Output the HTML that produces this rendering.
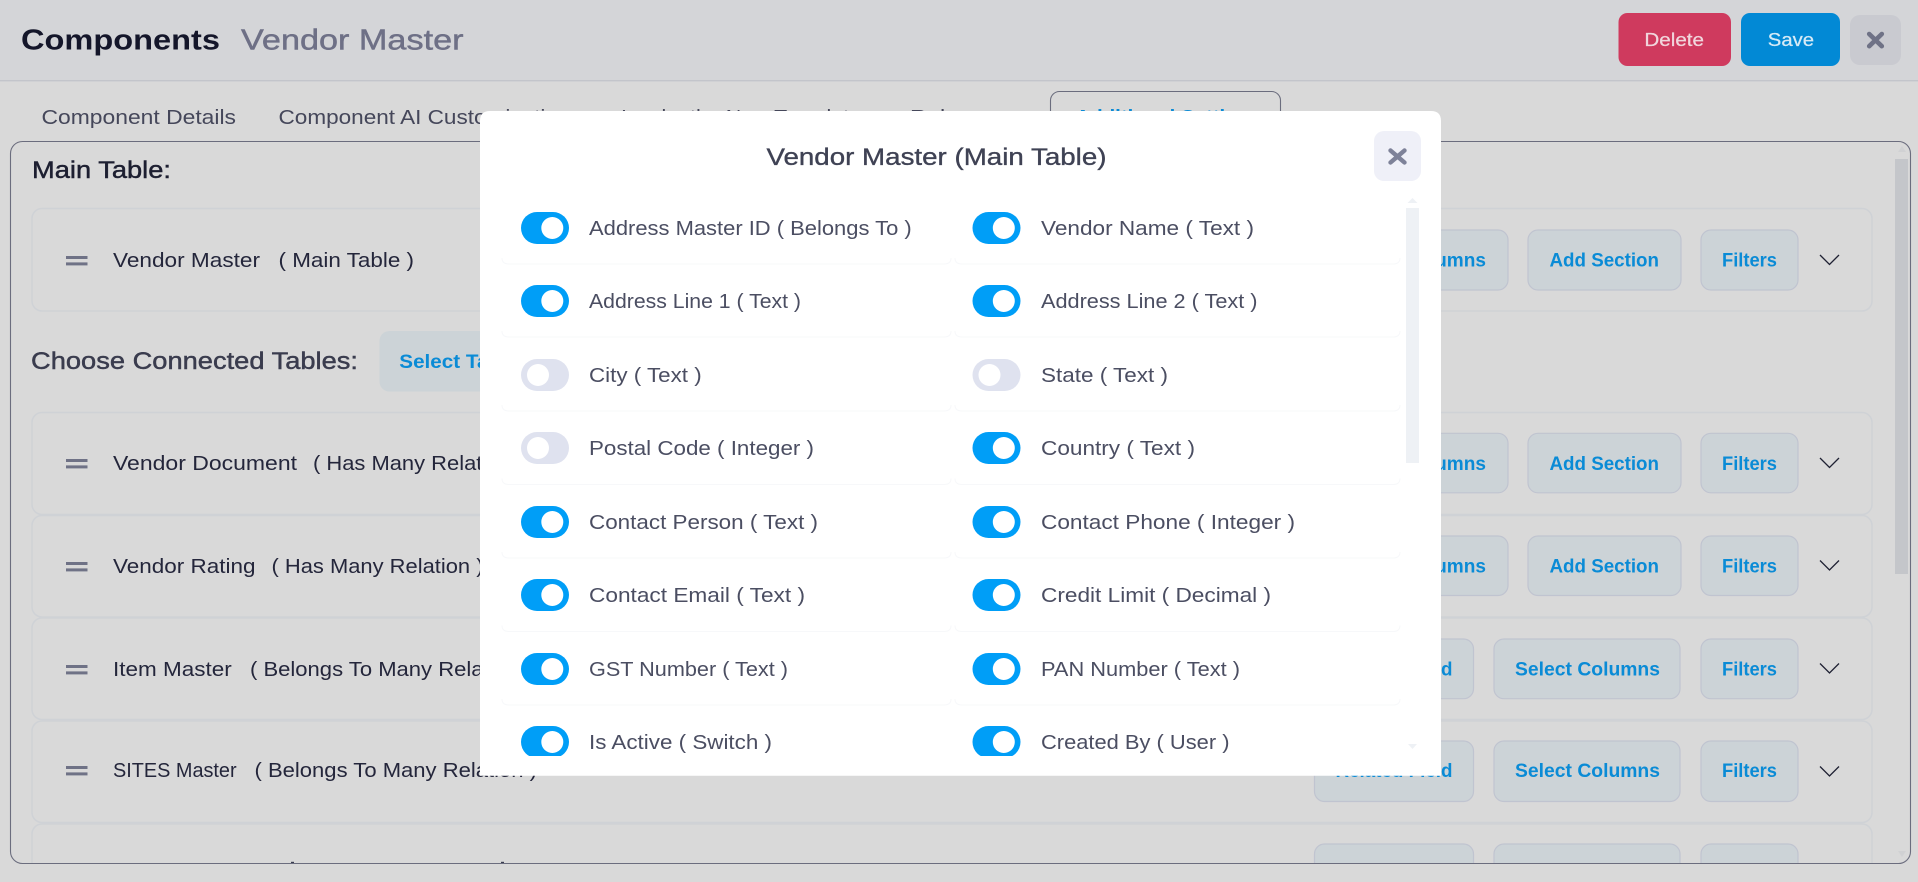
<!DOCTYPE html>
<html lang="en">
<head>
<meta charset="utf-8">
<title>Components - Vendor Master</title>
<style>
html,body{margin:0;padding:0;width:1918px;height:882px;overflow:hidden;background:#d9d9d9}
svg{display:block;position:absolute;left:0;top:0}
text{font-family:"Liberation Sans",Arial,sans-serif;white-space:pre}
.row{font-size:20.5px;fill:#4b4e62}
.card{font-size:20.5px;fill:#24263b}
.tab{font-size:20.5px;fill:#45475a}
.btn{font-size:19px;font-weight:700;fill:#0a8bd6}
.sb{fill:#ccd3d7;stroke:#c0c4d0;stroke-width:1.2}
.cd{fill:#d9d9d9;stroke:#cfd2d6;stroke-width:1.5}
.hd{fill:#6f7286}
.ch{fill:none;stroke:#1f2133;stroke-width:1.3}
</style>
</head>
<body>
<svg width="1918" height="882" viewBox="0 0 1918 882" xmlns="http://www.w3.org/2000/svg">
<defs>
<clipPath id="pc"><rect x="0" y="0" width="1918" height="863"/></clipPath>
<clipPath id="mb"><rect x="480" y="190" width="961" height="566"/></clipPath>
<g id="on"><rect x="0" y="0" width="48" height="32" rx="16" fill="#009ef7"/><circle cx="31.3" cy="16" r="11" fill="#fff"/></g>
<g id="off"><rect x="0" y="0" width="48" height="32" rx="16" fill="#dfe2ef"/><circle cx="17" cy="16" r="11" fill="#fff"/></g>
</defs>

<!-- header -->
<rect x="0" y="0" width="1918" height="80" fill="#d4d5d8"/>
<rect x="0" y="80" width="1918" height="1.4" fill="#c3c5cb"/>
<text x="21" y="49.5" font-size="29" font-weight="700" fill="#14162a" textLength="199" lengthAdjust="spacingAndGlyphs">Components</text>
<text x="241" y="49.5" font-size="29" fill="#6e7086" stroke="#6e7086" stroke-width=".45" textLength="222.5" lengthAdjust="spacingAndGlyphs">Vendor Master</text>
<rect x="1618.5" y="13" width="112.5" height="53" rx="9" fill="#cf3a5e"/>
<text x="1644.4" y="46" font-size="18.5" fill="#f1d6dd" stroke="#f1d6dd" stroke-width=".25" textLength="59.6" lengthAdjust="spacingAndGlyphs">Delete</text>
<rect x="1741" y="13" width="99" height="53" rx="9" fill="#0289d5"/>
<text x="1767.8" y="46" font-size="18.5" fill="#d6eaf6" stroke="#d6eaf6" stroke-width=".25" textLength="46.2" lengthAdjust="spacingAndGlyphs">Save</text>
<rect x="1850" y="15" width="51" height="50" rx="10" fill="#c9cad0"/>
<path d="M1869.2 34 L1881.8 46.2 M1881.8 34 L1869.2 46.2" stroke="#6f7286" stroke-width="4.6" stroke-linecap="round" fill="none"/>

<!-- tabs -->
<text class="tab" x="41.5" y="124" textLength="194.5" lengthAdjust="spacingAndGlyphs">Component Details</text>
<text class="tab" x="278.5" y="124" textLength="292" lengthAdjust="spacingAndGlyphs">Component AI Customization</text>
<text class="tab" x="621" y="124" textLength="240" lengthAdjust="spacingAndGlyphs">Invoke the New Template</text>
<text class="tab" x="910" y="124" textLength="60" lengthAdjust="spacingAndGlyphs">Roles</text>
<rect x="1050.5" y="91.5" width="230" height="50" rx="9" fill="#d9d9d9" stroke="#6b6d7e" stroke-width="1.1"/>
<text x="1075.5" y="124" font-size="20" font-weight="700" fill="#0a8bd6" textLength="186" lengthAdjust="spacingAndGlyphs">Additional Settings</text>

<!-- panel contents -->
<g clip-path="url(#pc)">
<text x="32" y="178" font-size="24.5" fill="#1d1f31" stroke="#1d1f31" stroke-width=".45" textLength="139" lengthAdjust="spacingAndGlyphs">Main Table:</text>

<rect class="cd" x="32" y="208.5" width="1840" height="102.5" rx="10"/>
<rect class="hd" x="66" y="256" width="21.5" height="3"/><rect class="hd" x="66" y="262.4" width="21.5" height="3"/>
<text class="card" x="113" y="267" textLength="147" lengthAdjust="spacingAndGlyphs">Vendor Master</text>
<text class="card" x="278.5" y="267" textLength="135.5" lengthAdjust="spacingAndGlyphs">( Main Table )</text>
<rect class="sb" x="1322" y="230" width="186" height="60" rx="10"/>
<text class="btn" x="1343" y="266.7" textLength="143" lengthAdjust="spacingAndGlyphs">Select Columns</text>
<rect class="sb" x="1528" y="230" width="153" height="60" rx="10"/>
<text class="btn" x="1549.5" y="266.7" textLength="109.5" lengthAdjust="spacingAndGlyphs">Add Section</text>
<rect class="sb" x="1701" y="230" width="97" height="60" rx="10"/>
<text class="btn" x="1722" y="266.7" textLength="55" lengthAdjust="spacingAndGlyphs">Filters</text>
<polyline class="ch" points="1820,255 1829.5,264.5 1839,255"/>

<text x="31" y="369" font-size="24.5" fill="#3a3c4e" stroke="#3a3c4e" stroke-width=".45" textLength="327" lengthAdjust="spacingAndGlyphs">Choose Connected Tables:</text>
<rect x="379.5" y="331" width="160" height="60.5" rx="10" fill="#ccd3d7"/>
<text class="btn" x="399.3" y="368" textLength="119" lengthAdjust="spacingAndGlyphs">Select Table</text>

<!-- card 2 -->
<rect class="cd" x="32" y="412.5" width="1840" height="102" rx="10"/>
<rect class="hd" x="66" y="459" width="21.5" height="3"/><rect class="hd" x="66" y="465.4" width="21.5" height="3"/>
<text class="card" x="113" y="470" textLength="184" lengthAdjust="spacingAndGlyphs">Vendor Document</text>
<text class="card" x="313" y="470" textLength="212" lengthAdjust="spacingAndGlyphs">( Has Many Relation )</text>
<rect class="sb" x="1322" y="433.3" width="186" height="59.5" rx="10"/>
<text class="btn" x="1343" y="470" textLength="143" lengthAdjust="spacingAndGlyphs">Select Columns</text>
<rect class="sb" x="1528" y="433.3" width="153" height="59.5" rx="10"/>
<text class="btn" x="1549.5" y="470" textLength="109.5" lengthAdjust="spacingAndGlyphs">Add Section</text>
<rect class="sb" x="1701" y="433.3" width="97" height="59.5" rx="10"/>
<text class="btn" x="1722" y="470" textLength="55" lengthAdjust="spacingAndGlyphs">Filters</text>
<polyline class="ch" points="1820,458 1829.5,467.5 1839,458"/>

<!-- card 3 -->
<rect class="cd" x="32" y="515.5" width="1840" height="101.5" rx="10"/>
<rect class="hd" x="66" y="562" width="21.5" height="3"/><rect class="hd" x="66" y="568.4" width="21.5" height="3"/>
<text class="card" x="113" y="573" textLength="142.5" lengthAdjust="spacingAndGlyphs">Vendor Rating</text>
<text class="card" x="271.5" y="573" textLength="212" lengthAdjust="spacingAndGlyphs">( Has Many Relation )</text>
<rect class="sb" x="1322" y="536" width="186" height="59.5" rx="10"/>
<text class="btn" x="1343" y="572.5" textLength="143" lengthAdjust="spacingAndGlyphs">Select Columns</text>
<rect class="sb" x="1528" y="536" width="153" height="59.5" rx="10"/>
<text class="btn" x="1549.5" y="572.5" textLength="109.5" lengthAdjust="spacingAndGlyphs">Add Section</text>
<rect class="sb" x="1701" y="536" width="97" height="59.5" rx="10"/>
<text class="btn" x="1722" y="572.5" textLength="55" lengthAdjust="spacingAndGlyphs">Filters</text>
<polyline class="ch" points="1820,560.5 1829.5,570 1839,560.5"/>

<!-- card 4 -->
<rect class="cd" x="32" y="618" width="1840" height="101.5" rx="10"/>
<rect class="hd" x="66" y="665" width="21.5" height="3"/><rect class="hd" x="66" y="671.4" width="21.5" height="3"/>
<text class="card" x="113" y="676" textLength="118.7" lengthAdjust="spacingAndGlyphs">Item Master</text>
<text class="card" x="250" y="676" textLength="282.5" lengthAdjust="spacingAndGlyphs">( Belongs To Many Relation )</text>
<rect class="sb" x="1314.5" y="639" width="159" height="59.7" rx="10"/>
<text class="btn" x="1335.5" y="675.5" textLength="117" lengthAdjust="spacingAndGlyphs">Related Field</text>
<rect class="sb" x="1494" y="639" width="186" height="59.7" rx="10"/>
<text class="btn" x="1515" y="675.5" textLength="145" lengthAdjust="spacingAndGlyphs">Select Columns</text>
<rect class="sb" x="1701" y="639" width="97" height="59.7" rx="10"/>
<text class="btn" x="1722" y="675.5" textLength="55" lengthAdjust="spacingAndGlyphs">Filters</text>
<polyline class="ch" points="1820,663.5 1829.5,673 1839,663.5"/>

<!-- card 5 -->
<rect class="cd" x="32" y="721" width="1840" height="101.5" rx="10"/>
<rect class="hd" x="66" y="766" width="21.5" height="3"/><rect class="hd" x="66" y="772.4" width="21.5" height="3"/>
<text class="card" x="113" y="777" textLength="123.6" lengthAdjust="spacingAndGlyphs">SITES Master</text>
<text class="card" x="254.5" y="777" textLength="282.5" lengthAdjust="spacingAndGlyphs">( Belongs To Many Relation )</text>
<rect class="sb" x="1314.5" y="741" width="159" height="60.5" rx="10"/>
<text class="btn" x="1335.5" y="777" textLength="117" lengthAdjust="spacingAndGlyphs">Related Field</text>
<rect class="sb" x="1494" y="741" width="186" height="60.5" rx="10"/>
<text class="btn" x="1515" y="777" textLength="145" lengthAdjust="spacingAndGlyphs">Select Columns</text>
<rect class="sb" x="1701" y="741" width="97" height="60.5" rx="10"/>
<text class="btn" x="1722" y="777" textLength="55" lengthAdjust="spacingAndGlyphs">Filters</text>
<polyline class="ch" points="1820,766.5 1829.5,776 1839,766.5"/>

<!-- card 6 -->
<rect class="cd" x="32" y="824" width="1840" height="102" rx="10"/>
<text class="card" x="113" y="882" textLength="160" lengthAdjust="spacingAndGlyphs">Vendor Contract</text>
<text class="card" x="291" y="882" textLength="212" lengthAdjust="spacingAndGlyphs">( Has Many Relation )</text>
<rect x="291" y="861.8" width="3" height="1.4" fill="#3a3c50"/><rect x="501" y="861.8" width="3" height="1.4" fill="#3a3c50"/>
<rect class="sb" x="1314.5" y="844" width="159" height="60" rx="10"/>
<rect class="sb" x="1494" y="844" width="186" height="60" rx="10"/>
<rect class="sb" x="1701" y="844" width="97" height="60" rx="10"/>

<!-- panel scrollbar -->
<path d="M1902 146 l-4 6 h8 z" fill="#d0d1d3"/>
<rect x="1895" y="159" width="13" height="415" fill="#c4c6ca"/>
<path d="M1898 851 l4 6 l4 -6 z" fill="#d0d1d3"/>
</g>
<rect x="10.5" y="141.5" width="1900" height="722" rx="12" fill="none" stroke="#6b6d7e" stroke-width="1.1"/>

<!-- modal -->
<path d="M490 111 H1431 Q1441 111 1441 121 V775.7 H480 V121 Q480 111 490 111 Z" fill="#fff"/>
<text x="766.5" y="165" font-size="24" fill="#3f4254" stroke="#3f4254" stroke-width=".35" textLength="340" lengthAdjust="spacingAndGlyphs">Vendor Master (Main Table)</text>
<rect x="1374" y="131" width="47" height="50" rx="10" fill="#eff0f8"/>
<path d="M1390.5 150.5 L1404.5 162.5 M1404.5 150.5 L1390.5 162.5" stroke="#7e8299" stroke-width="4.4" stroke-linecap="round" fill="none"/>

<!-- modal scrollbar -->
<path d="M1412.5 198 l-5 5 h10 z" fill="#eef1f5"/>
<rect x="1406" y="208" width="13" height="255" fill="#eef1f5"/>
<path d="M1408 744 l4.5 5 l4.5 -5 z" fill="#eef1f5"/>

<!-- row separators -->
<g fill="none" stroke="#f7f8fa" stroke-width="1">
<path d="M502 258 q0 6 7 6 H944 q7 0 7 -6 M955 258 q0 6 7 6 H1393 q7 0 7 -6"/>
<path d="M502 331 q0 6 7 6 H944 q7 0 7 -6 M955 331 q0 6 7 6 H1393 q7 0 7 -6"/>
<path d="M502 405 q0 6 7 6 H944 q7 0 7 -6 M955 405 q0 6 7 6 H1393 q7 0 7 -6"/>
<path d="M502 478.5 q0 6 7 6 H944 q7 0 7 -6 M955 478.5 q0 6 7 6 H1393 q7 0 7 -6"/>
<path d="M502 552 q0 6 7 6 H944 q7 0 7 -6 M955 552 q0 6 7 6 H1393 q7 0 7 -6"/>
<path d="M502 625.5 q0 6 7 6 H944 q7 0 7 -6 M955 625.5 q0 6 7 6 H1393 q7 0 7 -6"/>
<path d="M502 699 q0 6 7 6 H944 q7 0 7 -6 M955 699 q0 6 7 6 H1393 q7 0 7 -6"/>
</g>

<!-- toggles -->
<g clip-path="url(#mb)">
<use href="#on" x="521" y="212"/><use href="#on" x="972.5" y="212"/>
<use href="#on" x="521" y="285"/><use href="#on" x="972.5" y="285"/>
<use href="#off" x="521" y="359"/><use href="#off" x="972.5" y="359"/>
<use href="#off" x="521" y="432"/><use href="#on" x="972.5" y="432"/>
<use href="#on" x="521" y="506"/><use href="#on" x="972.5" y="506"/>
<use href="#on" x="521" y="579"/><use href="#on" x="972.5" y="579"/>
<use href="#on" x="521" y="653"/><use href="#on" x="972.5" y="653"/>
<use href="#on" x="521" y="726"/><use href="#on" x="972.5" y="726"/>
</g>

<!-- row labels -->
<text class="row" x="589" y="235" textLength="322.7" lengthAdjust="spacingAndGlyphs">Address Master ID ( Belongs To )</text>
<text class="row" x="1041" y="235" textLength="213" lengthAdjust="spacingAndGlyphs">Vendor Name ( Text )</text>
<text class="row" x="589" y="308" textLength="212" lengthAdjust="spacingAndGlyphs">Address Line 1 ( Text )</text>
<text class="row" x="1041" y="308" textLength="216.5" lengthAdjust="spacingAndGlyphs">Address Line 2 ( Text )</text>
<text class="row" x="589" y="382" textLength="112.7" lengthAdjust="spacingAndGlyphs">City ( Text )</text>
<text class="row" x="1041" y="382" textLength="127" lengthAdjust="spacingAndGlyphs">State ( Text )</text>
<text class="row" x="589" y="455" textLength="225" lengthAdjust="spacingAndGlyphs">Postal Code ( Integer )</text>
<text class="row" x="1041" y="455" textLength="154" lengthAdjust="spacingAndGlyphs">Country ( Text )</text>
<text class="row" x="589" y="529" textLength="229" lengthAdjust="spacingAndGlyphs">Contact Person ( Text )</text>
<text class="row" x="1041" y="529" textLength="254" lengthAdjust="spacingAndGlyphs">Contact Phone ( Integer )</text>
<text class="row" x="589" y="602" textLength="216" lengthAdjust="spacingAndGlyphs">Contact Email ( Text )</text>
<text class="row" x="1041" y="602" textLength="230" lengthAdjust="spacingAndGlyphs">Credit Limit ( Decimal )</text>
<text class="row" x="589" y="676" textLength="199" lengthAdjust="spacingAndGlyphs">GST Number ( Text )</text>
<text class="row" x="1041" y="676" textLength="199" lengthAdjust="spacingAndGlyphs">PAN Number ( Text )</text>
<text class="row" x="589" y="749" textLength="183" lengthAdjust="spacingAndGlyphs">Is Active ( Switch )</text>
<text class="row" x="1041" y="749" textLength="188.5" lengthAdjust="spacingAndGlyphs">Created By ( User )</text>
</svg>
</body>
</html>
